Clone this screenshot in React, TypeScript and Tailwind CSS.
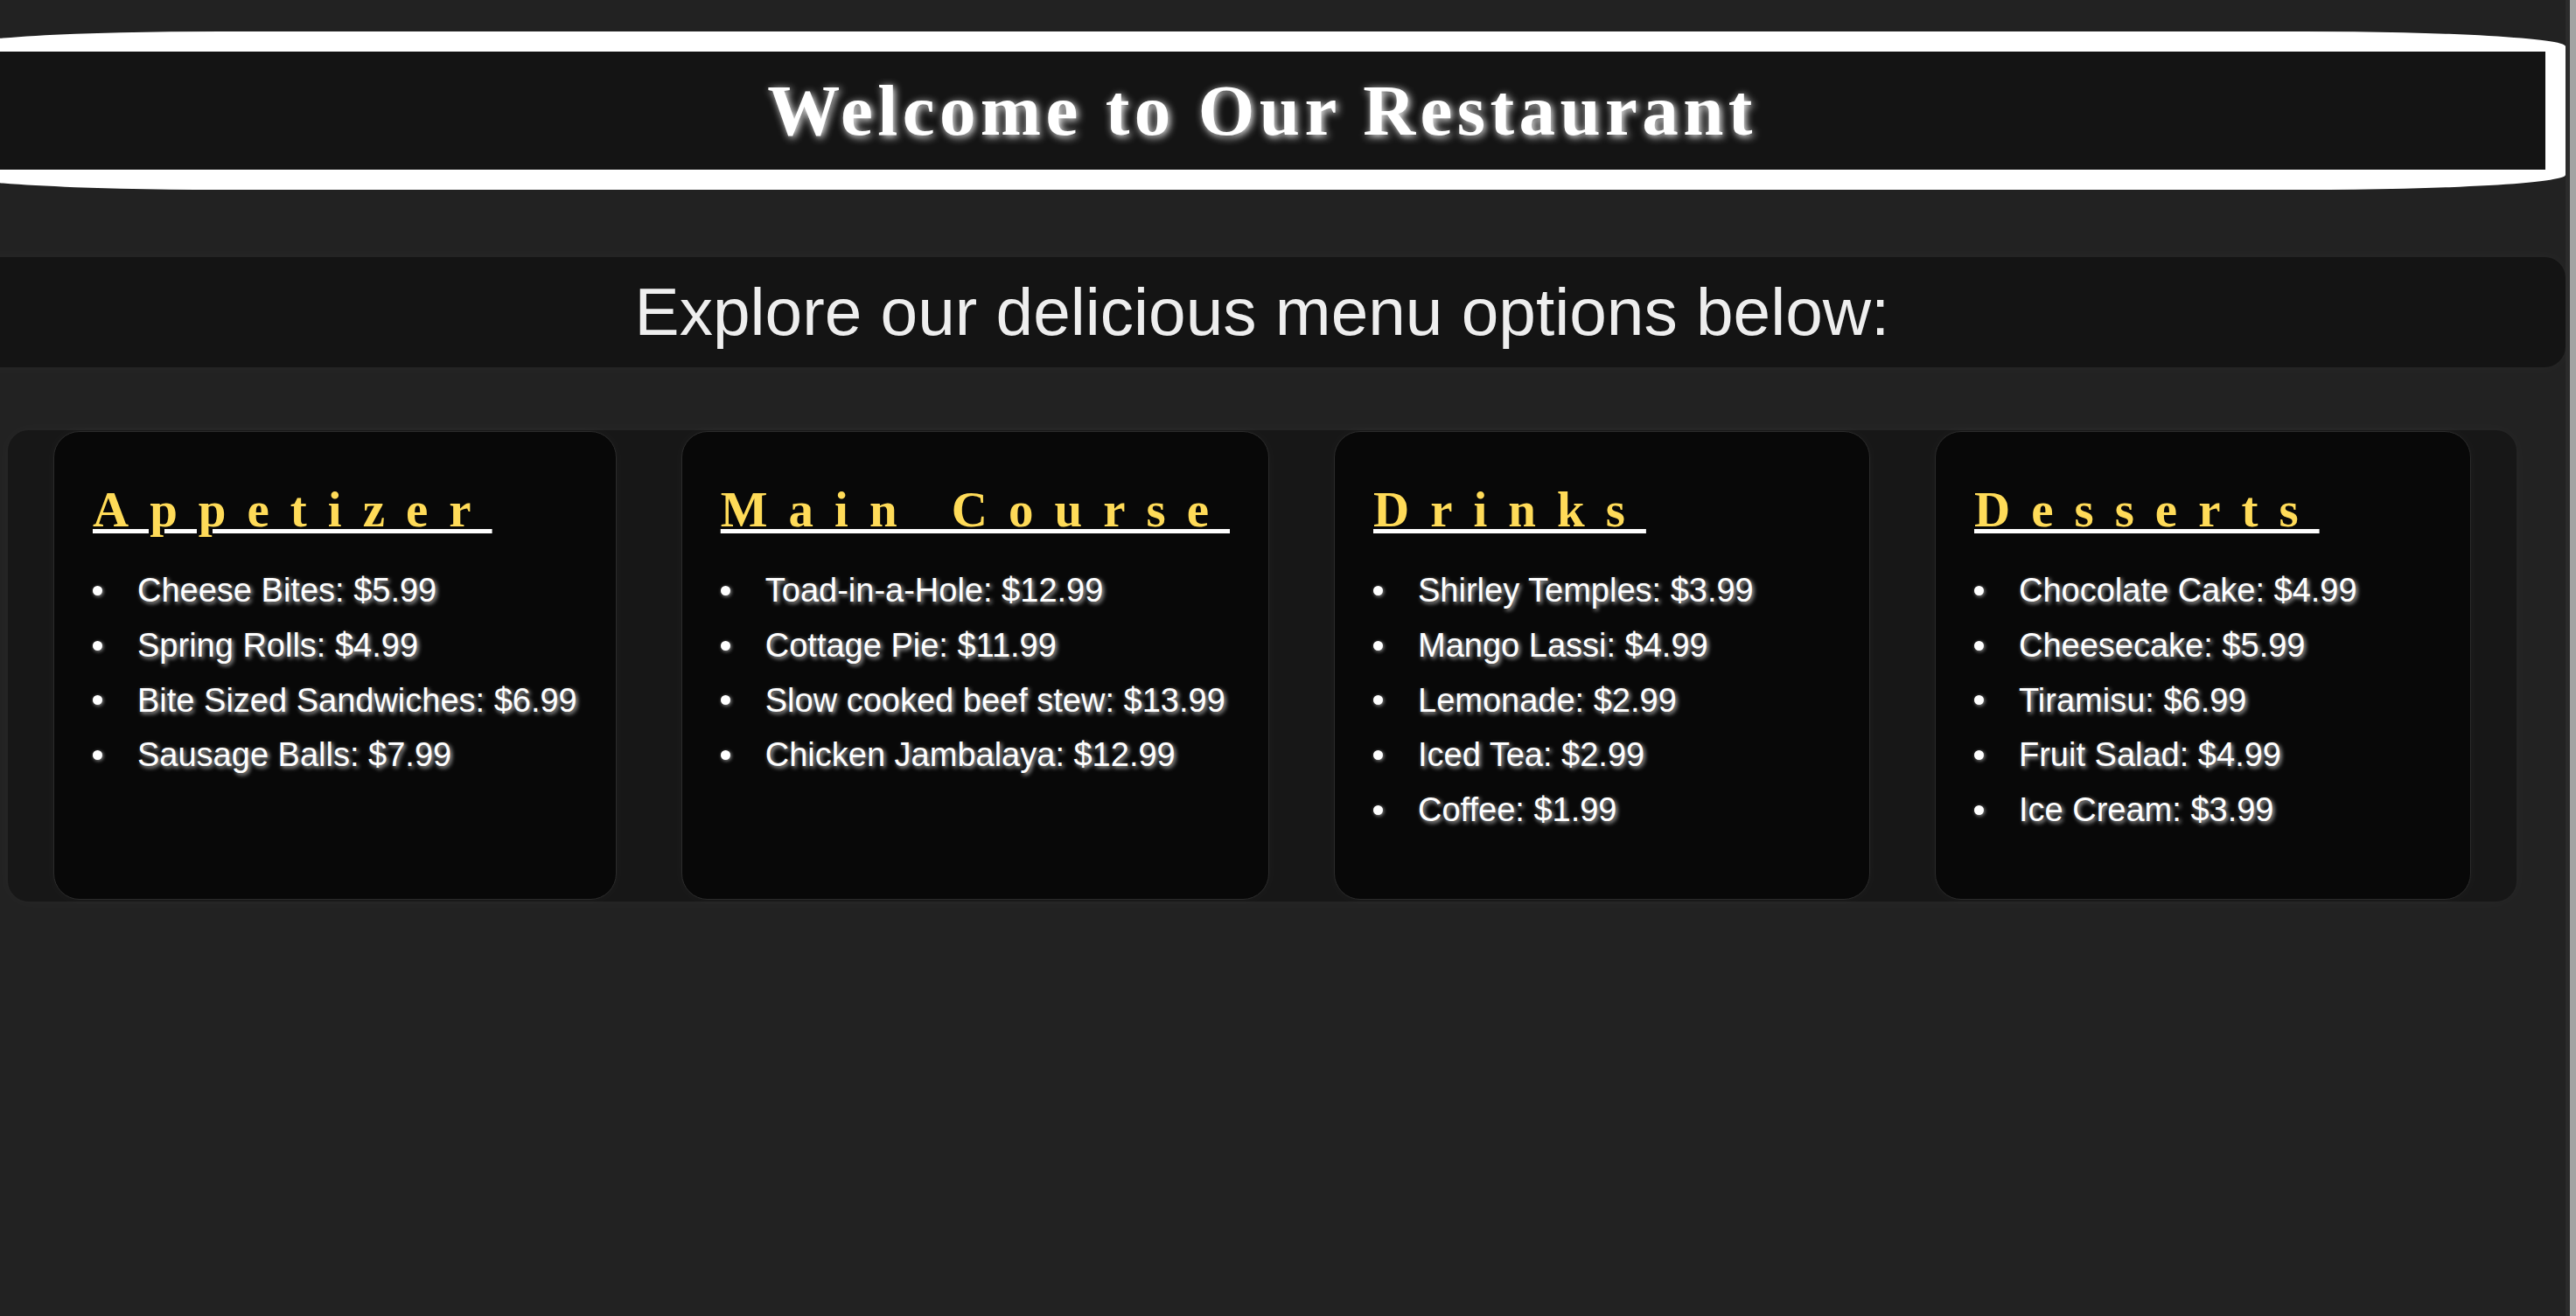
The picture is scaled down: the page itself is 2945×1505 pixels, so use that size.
const menu = [
  {
    title: "Appetizer",
    items: [
      "Cheese Bites: $5.99",
      "Spring Rolls: $4.99",
      "Bite Sized Sandwiches: $6.99",
      "Sausage Balls: $7.99",
    ],
  },
  {
    title: "Main Course",
    items: [
      "Toad-in-a-Hole: $12.99",
      "Cottage Pie: $11.99",
      "Slow cooked beef stew: $13.99",
      "Chicken Jambalaya: $12.99",
    ],
  },
  {
    title: "Drinks",
    items: [
      "Shirley Temples: $3.99",
      "Mango Lassi: $4.99",
      "Lemonade: $2.99",
      "Iced Tea: $2.99",
      "Coffee: $1.99",
    ],
  },
  {
    title: "Desserts",
    items: [
      "Chocolate Cake: $4.99",
      "Cheesecake: $5.99",
      "Tiramisu: $6.99",
      "Fruit Salad: $4.99",
      "Ice Cream: $3.99",
    ],
  },
];

function MenuCard({ title, items }: { title: string; items: string[] }) {
  return (
    <div className="flex-1 whitespace-nowrap rounded-[30px] border border-[#2b2b2b] bg-[#080808] px-[44px] pt-[56px] pb-[70px] shadow-[0_0_16px_rgba(255,255,255,0.03)]">
      <h2 className="font-['Liberation_Serif',serif] text-[57px] leading-[normal] font-bold tracking-[24px] text-[#ffdb58] underline decoration-white decoration-[length:4.5px] underline-offset-[3px]">
        {title}
      </h2>
      <ul className="mt-[29px]">
        {items.map((item) => (
          <li
            key={item}
            className="flex items-center gap-[40px] font-['Liberation_Sans',Arial,sans-serif] text-[38px] leading-[62.8px] text-white"
          >
            <span className="h-[11px] w-[11px] shrink-0 rounded-full bg-white shadow-[1px_1px_4px_rgba(255,255,255,0.6)]" />
            <span className="[text-shadow:2px_2px_5px_rgba(255,255,255,0.75)]">
              {item}
            </span>
          </li>
        ))}
      </ul>
    </div>
  );
}

export default function App() {
  return (
    <div className="flex h-screen w-full overflow-hidden bg-[#222222]">
      <div className="min-w-0 flex-1 overflow-hidden">
        <main className="-ml-[47px] w-[2980px] pt-[36px]">
          {/* banner */}
          <header className="rounded-[300px/17px] border-[23px] border-white bg-[#141414]">
            <h1 className="flex h-[135px] items-center justify-center font-['Liberation_Serif',serif] text-[83px] font-bold tracking-[5.4px] text-white [text-shadow:2px_2px_10px_#ffffff]">
              Welcome to Our Restaurant
            </h1>
          </header>

          <section className="mt-[77px] rounded-[24px] bg-[#141414] py-[20px] text-center shadow-[0_0_20px_rgba(255,255,255,0.03)]">
            <p className="font-['Liberation_Sans',Arial,sans-serif] text-[76.6px] leading-[86px] text-[#eeeeee]">
              Explore our delicious menu options below:
            </p>
          </section>

          <section className="mx-[56px] mt-[72px] flex gap-[74px] rounded-[24px] bg-[#171717] px-[52px] pt-px pb-[2px] shadow-[0_0_20px_rgba(255,255,255,0.03)]">
            {menu.map((m) => (
              <MenuCard key={m.title} title={m.title} items={m.items} />
            ))}
          </section>
        </main>
      </div>
      {/* scrollbar */}
      <div className="flex w-[12px] shrink-0 justify-end bg-[#2b2b2b]">
        <div className="w-[7px] bg-[#a3a3a3]" />
      </div>
    </div>
  );
}
